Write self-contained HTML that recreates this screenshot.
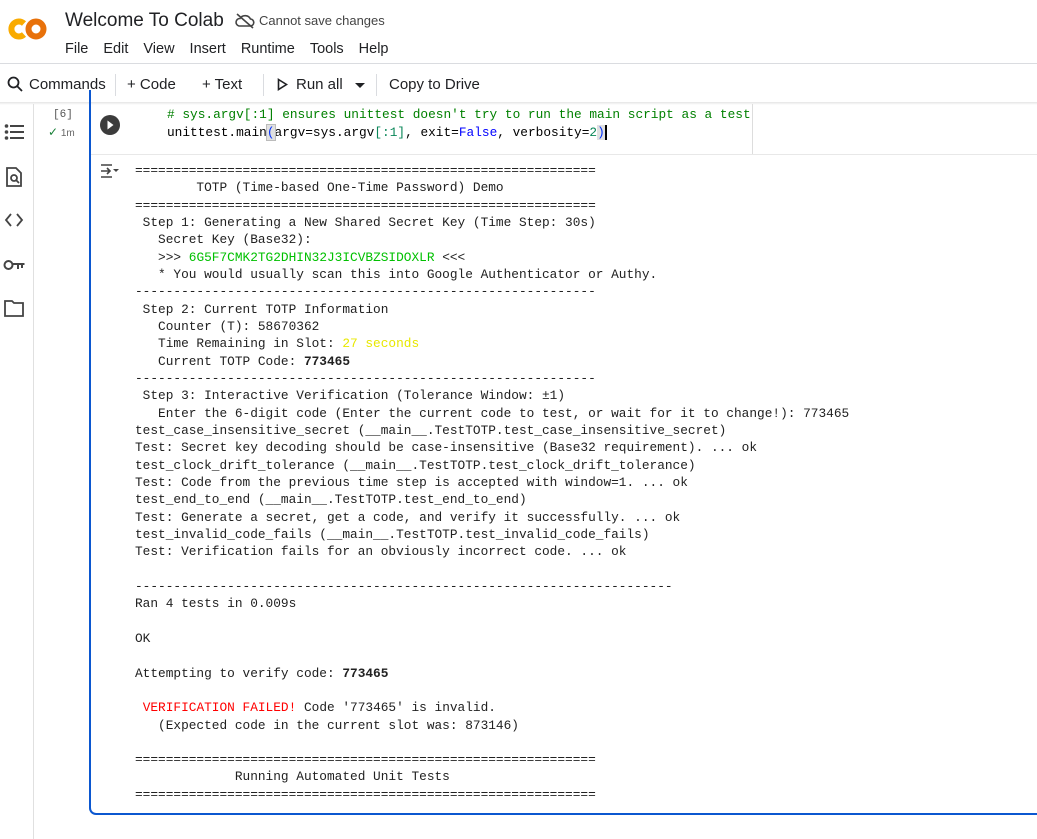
<!DOCTYPE html>
<html><head><meta charset="utf-8"><style>
*{margin:0;padding:0;box-sizing:border-box}
body{width:1037px;height:839px;overflow:hidden;background:#fff;font-family:"Liberation Sans",Arial,sans-serif;color:#202124;position:relative}
.abs{position:absolute}
.menu span{margin-right:15px}
.mono{font-family:"Liberation Mono",monospace;font-size:12.8px}
.mono div{white-space:pre}
.out div{height:17.33px;line-height:17.33px}
.g{color:#00c000}.y{color:#e8e800}.r{color:#ff0000}
b{font-weight:bold}
.tb{font-size:15px;color:#202124;white-space:nowrap}
</style></head><body>
<!-- logo -->
<svg class="abs" style="left:7px;top:15px" width="42" height="28" viewBox="0 0 42 28">
<path d="M17 8.5A7.5 7.5 0 1 0 17 19.5" fill="none" stroke="#f9ab00" stroke-width="6"/>
<circle cx="29" cy="14" r="7.5" fill="none" stroke="#e8710a" stroke-width="6"/>
</svg>
<div class="abs" style="left:65px;top:10px;font-size:19px;color:#202124">Welcome To Colab</div>
<svg class="abs" style="left:235px;top:13px" width="20" height="16" viewBox="0 0 20 16"><path d="M4 13h11a3.5 3.5 0 0 0 .5-7A6 6 0 0 0 5 5.5 3.8 3.8 0 0 0 4 13z" fill="none" stroke="#444" stroke-width="1.6"/><path d="M2 1l16 14" stroke="#444" stroke-width="1.6"/></svg>
<div class="abs" style="left:259px;top:13px;font-size:13px;color:#444">Cannot save changes</div>
<div class="abs menu" style="left:65px;top:41px;font-size:14.5px;white-space:nowrap"><span>File</span><span>Edit</span><span>View</span><span>Insert</span><span>Runtime</span><span>Tools</span><span>Help</span></div>
<div class="abs" style="left:0;top:63px;width:1037px;height:1px;background:#dadce0"></div>
<!-- toolbar -->
<svg class="abs" style="left:7px;top:76px" width="16" height="16" viewBox="0 0 16 16"><circle cx="6.5" cy="6.5" r="5" fill="none" stroke="#202124" stroke-width="1.8"/><path d="M10 10l5 5" stroke="#202124" stroke-width="1.8"/></svg>
<div class="abs tb" style="left:29px;top:76px">Commands</div>
<div class="abs" style="left:115px;top:74px;width:1px;height:22px;background:#dadce0"></div>
<div class="abs tb" style="left:127px;top:76px">+ Code</div>
<div class="abs tb" style="left:202px;top:76px">+ Text</div>
<div class="abs" style="left:263px;top:74px;width:1px;height:22px;background:#dadce0"></div>
<svg class="abs" style="left:277px;top:78px" width="11" height="13" viewBox="0 0 11 13"><path d="M1.5 1.5l8 5-8 5z" fill="none" stroke="#202124" stroke-width="1.6"/></svg>
<div class="abs tb" style="left:296px;top:76px">Run all</div>
<div class="abs" style="left:355px;top:83px;width:0;height:0;border-left:5px solid transparent;border-right:5px solid transparent;border-top:5px solid #202124"></div>
<div class="abs" style="left:376px;top:74px;width:1px;height:22px;background:#dadce0"></div>
<div class="abs tb" style="left:389px;top:76px">Copy to Drive</div>
<div class="abs" style="left:0;top:102px;width:1037px;height:3px;background:linear-gradient(#e4e4e4,#fff)"></div>
<!-- sidebar -->
<div class="abs" style="left:33px;top:104px;width:1px;height:735px;background:#e0e0e0"></div>
<svg class="abs" style="left:4px;top:123px" width="20" height="18" viewBox="0 0 20 18"><g fill="#444"><circle cx="2.5" cy="3" r="1.8"/><circle cx="2.5" cy="9" r="1.8"/><circle cx="2.5" cy="15" r="1.8"/><rect x="6" y="2" width="14" height="2"/><rect x="6" y="8" width="14" height="2"/><rect x="6" y="14" width="14" height="2"/></g></svg>
<svg class="abs" style="left:6px;top:167px" width="16" height="20" viewBox="0 0 16 20"><path d="M1 1h9l5 5v13H1z" fill="none" stroke="#444" stroke-width="1.8"/><circle cx="8" cy="11" r="3" fill="none" stroke="#444" stroke-width="1.8"/><path d="M10 13l3 3" stroke="#444" stroke-width="1.8"/></svg>
<svg class="abs" style="left:4px;top:213px" width="20" height="14" viewBox="0 0 20 14"><path d="M7 1L2 7l5 6M13 1l5 6-5 6" fill="none" stroke="#444" stroke-width="1.8"/></svg>
<svg class="abs" style="left:3px;top:258px" width="22" height="14" viewBox="0 0 22 14"><circle cx="5.5" cy="7" r="4" fill="none" stroke="#444" stroke-width="2"/><path d="M9.5 6h12M15 6v5M19 6v4" stroke="#444" stroke-width="2"/></svg>
<svg class="abs" style="left:4px;top:300px" width="20" height="17" viewBox="0 0 20 17"><path d="M1 1h7l2 2h9v13H1z" fill="none" stroke="#444" stroke-width="1.8"/></svg>
<!-- gutter -->
<div class="abs mono" style="left:53px;top:109px;font-size:11px;color:#555">[6]</div>
<div class="abs" style="left:48px;top:125px;font-size:10px;color:#666;white-space:nowrap"><span style="color:#188038;font-size:12px">✓</span> 1m</div>
<!-- cell -->
<div class="abs" style="left:89px;top:90px;width:960px;height:725px;border:2px solid #0b57d0;border-top:none;border-right:none;border-bottom-left-radius:7px"></div>
<div class="abs" style="left:91px;top:154px;width:946px;height:1px;background:#e8e8e8"></div>
<div class="abs" style="left:752px;top:104px;width:1px;height:50px;background:#ddd"></div>
<svg class="abs" style="left:100px;top:115px" width="20" height="20" viewBox="0 0 20 20"><circle cx="10" cy="10" r="10" fill="#3c3c3c"/><path d="M7.5 5.5l6 4.5-6 4.5z" fill="#fff"/></svg>
<div class="abs mono" style="left:167px;top:106px;line-height:18px">
<div style="color:#008000"># sys.argv[:1] ensures unittest doesn't try to run the main script as a test</div>
<div style="color:#000">unittest.main<span style="background:#e0e0e0;color:#0431fa;outline:1px solid #bbb">(</span>argv=sys.argv<span style="color:#098658">[:1]</span>, exit=<span style="color:#0000ff">False</span>, verbosity=<span style="color:#098658">2</span><span style="background:#e0e0e0;color:#0431fa">)</span><span style="border-left:2px solid #000"></span></div>
</div>
<svg class="abs" style="left:100px;top:163px" width="20" height="16" viewBox="0 0 20 16"><path d="M1 2h11M1 14h11M1 8h9M7 5l3 3-3 3" fill="none" stroke="#444" stroke-width="1.6"/><path d="M13 6h6l-3 3z" fill="#444"/></svg>
<div class="abs mono out" style="left:135px;top:162px;color:#212121"><div>============================================================</div><div>        TOTP (Time-based One-Time Password) Demo</div><div>============================================================</div><div> Step 1: Generating a New Shared Secret Key (Time Step: 30s)</div><div>   Secret Key (Base32):</div><div>   &gt;&gt;&gt; <span class="g">6G5F7CMK2TG2DHIN32J3ICVBZSIDOXLR</span> &lt;&lt;&lt;</div><div>   * You would usually scan this into Google Authenticator or Authy.</div><div>------------------------------------------------------------</div><div> Step 2: Current TOTP Information</div><div>   Counter (T): 58670362</div><div>   Time Remaining in Slot: <span class="y">27 seconds</span></div><div>   Current TOTP Code: <b>773465</b></div><div>------------------------------------------------------------</div><div> Step 3: Interactive Verification (Tolerance Window: ±1)</div><div>   Enter the 6-digit code (Enter the current code to test, or wait for it to change!): 773465</div><div>test_case_insensitive_secret (__main__.TestTOTP.test_case_insensitive_secret)</div><div>Test: Secret key decoding should be case-insensitive (Base32 requirement). ... ok</div><div>test_clock_drift_tolerance (__main__.TestTOTP.test_clock_drift_tolerance)</div><div>Test: Code from the previous time step is accepted with window=1. ... ok</div><div>test_end_to_end (__main__.TestTOTP.test_end_to_end)</div><div>Test: Generate a secret, get a code, and verify it successfully. ... ok</div><div>test_invalid_code_fails (__main__.TestTOTP.test_invalid_code_fails)</div><div>Test: Verification fails for an obviously incorrect code. ... ok</div><div> </div><div>----------------------------------------------------------------------</div><div>Ran 4 tests in 0.009s</div><div> </div><div>OK</div><div> </div><div>Attempting to verify code: <b>773465</b></div><div> </div><div> <span class="r">VERIFICATION FAILED!</span> Code '773465' is invalid.</div><div>   (Expected code in the current slot was: 873146)</div><div> </div><div>============================================================</div><div>             Running Automated Unit Tests</div><div>============================================================</div></div>
</body></html>
